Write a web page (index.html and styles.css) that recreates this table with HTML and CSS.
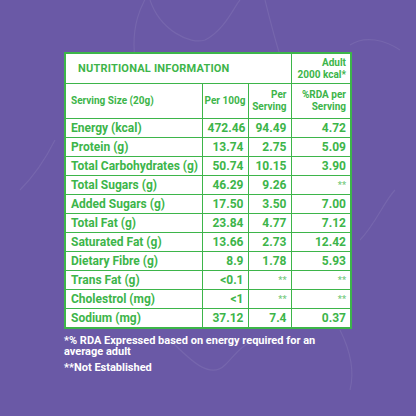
FILE: index.html
```html
<!DOCTYPE html>
<html>

<head>
    <meta charset="utf-8">
    <title>Nutritional Information</title>
    <link rel="stylesheet" href="styles.css">
</head>

<body>
    <svg class="swirls" width="416" height="416" viewBox="0 0 416 416">
        <path d="M150 0 C160 30 190 45 205 40 C225 30 235 5 240 0" />
        <path d="M135 60 C130 20 145 0 150 -10" />
        <path d="M265 0 C270 20 275 40 280 55" />
        <path d="M350 45 C365 35 385 40 400 50" />
        <path d="M20 190 C40 170 50 150 55 140" />
        <path d="M360 240 C375 225 385 200 395 190" />
        <path d="M170 340 C190 360 210 380 225 365 C240 350 250 330 280 345" />
        <path d="M340 330 C350 350 355 370 350 390" />
    </svg>
    <div class="panel">
        <table class="nutrition">
            <colgroup>
                <col class="col-name">
                <col class="col-100g">
                <col class="col-serving">
                <col class="col-rda">
            </colgroup>
            <tr class="title-row">
                <th colspan="3" class="title">NUTRITIONAL INFORMATION</th>
                <th class="num">Adult<br>2000 kcal*</th>
            </tr>
            <tr class="head-row">
                <th>Serving Size (20g)</th>
                <th class="num">Per 100g</th>
                <th class="num">Per<br>Serving</th>
                <th class="num">%RDA per<br>Serving</th>
            </tr>
            <tr><td>Energy (kcal)</td><td class="num">472.46</td><td class="num">94.49</td><td class="num">4.72</td></tr>
            <tr><td>Protein (g)</td><td class="num">13.74</td><td class="num">2.75</td><td class="num">5.09</td></tr>
            <tr><td>Total Carbohydrates (g)</td><td class="num">50.74</td><td class="num">10.15</td><td class="num">3.90</td></tr>
            <tr><td>Total Sugars (g)</td><td class="num">46.29</td><td class="num">9.26</td><td class="num star">**</td></tr>
            <tr><td>Added Sugars (g)</td><td class="num">17.50</td><td class="num">3.50</td><td class="num">7.00</td></tr>
            <tr><td>Total Fat (g)</td><td class="num">23.84</td><td class="num">4.77</td><td class="num">7.12</td></tr>
            <tr><td>Saturated Fat (g)</td><td class="num">13.66</td><td class="num">2.73</td><td class="num">12.42</td></tr>
            <tr><td>Dietary Fibre (g)</td><td class="num">8.9</td><td class="num">1.78</td><td class="num">5.93</td></tr>
            <tr><td>Trans Fat (g)</td><td class="num">&lt;0.1</td><td class="num star">**</td><td class="num star">**</td></tr>
            <tr><td>Cholestrol (mg)</td><td class="num">&lt;1</td><td class="num star">**</td><td class="num star">**</td></tr>
            <tr><td>Sodium (mg)</td><td class="num">37.12</td><td class="num">7.4</td><td class="num">0.37</td></tr>
        </table>
        <p class="note">*% RDA Expressed based on energy required for an average adult</p>
        <p class="note">**Not Established</p>
    </div>
</body>

</html>
```

FILE: styles.css
```css
body {
    margin: 0;
    padding: 0;
    width: 416px;
    height: 416px;
    background: #6a59a6;
    font-family: Roboto, "Liberation Sans", sans-serif;
    overflow: hidden;
}

.swirls {
    position: absolute;
    top: 0;
    left: 0;
}

.swirls path {
    fill: none;
    stroke: #ffffff;
    stroke-opacity: 0.08;
    stroke-width: 1.2;
}

.panel {
    position: relative;
    width: 286px;
    padding: 52px 0 0 64px;
}

.nutrition {
    width: 286px;
    border-collapse: collapse;
    background: #ffffff;
    border: 2px solid #3db54a;
    color: #3db54a;
    font-weight: 700;
    table-layout: fixed;
}

.col-name {
    width: 137px;
}

.col-100g {
    width: 46px;
}

.col-serving {
    width: 43px;
}

.col-rda {
    width: 60px;
}

.nutrition th,
.nutrition td {
    border: 1px solid #3db54a;
    padding: 0 4px 0 5px;
    text-align: left;
    white-space: nowrap;
}

.nutrition td {
    height: 18px;
    font-size: 12px;
    line-height: 14px;
}

.nutrition .num {
    text-align: right;
}

.title-row th {
    height: 29px;
    font-size: 10px;
    line-height: 12px;
}

.title-row .title {
    font-size: 11px;
    padding-left: 12px;
    letter-spacing: 0.2px;
}

.head-row th {
    height: 34px;
    font-size: 10px;
    line-height: 12px;
    padding-left: 2px;
}

.head-row th:first-child {
    padding-left: 5px;
}

.star {
    font-size: 9px !important;
    opacity: 0.7;
}

.note {
    margin: 0;
    color: #ffffff;
    font-size: 11px;
    font-weight: 700;
    line-height: 11px;
}

.note:first-of-type {
    margin-top: 6px;
}

.note + .note {
    margin-top: 5px;
}
```
